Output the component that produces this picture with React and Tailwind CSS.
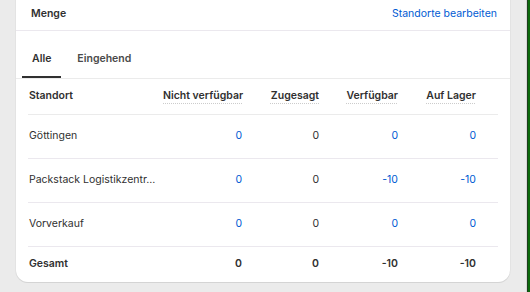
const rows = [
  { name: "Göttingen", values: [0, 0, 0, 0] },
  { name: "Packstack Logistikzentr...", values: [0, 0, -10, -10] },
  { name: "Vorverkauf", values: [0, 0, 0, 0] },
];

const columns = ["Nicht verfügbar", "Zugesagt", "Verfügbar", "Auf Lager"];

export default function App() {
  return (
    <div
      className="flex h-[292px] w-[530px] overflow-hidden bg-[#ebebeb] text-[#303030]"
      style={{ fontFamily: "Inter, 'Noto Sans', sans-serif" }}
    >
      <div className="flex-1 pl-4 pr-4">
        <div className="w-[494px] rounded-b-xl bg-white shadow-[0_1px_0_0_#d4d4d4,0_0_0_1px_#e3e3e3]">
          {/* Header */}
          <div className="flex h-[31px] items-center justify-between border-b border-[#ebe8ee] pb-[3px] pl-[15px] pr-[13px]">
            <h2 className="text-[10.5px] font-semibold">Menge</h2>
            <a href="#" className="text-[10.5px] text-[#005bd3]">
              Standorte bearbeiten
            </a>
          </div>

          {/* Tabs */}
          <div className="flex gap-[6px] border-b border-[#ebebeb] px-[6px] pt-[20px]">
            <button className="border-b-2 border-[#303030] px-[10px] pb-[9px] text-[10.5px] font-semibold text-[#303030]">
              Alle
            </button>
            <button className="border-b-2 border-transparent px-[10px] pb-[9px] text-[10.5px] font-semibold text-[#4a4a4a]">
              Eingehend
            </button>
          </div>

          {/* Table */}
          <div className="px-3 text-[10.5px]">
            <div className="grid h-[36px] grid-cols-[1fr_79px_77px_79px_78px] items-center border-b border-[#ebebeb] pl-px pr-[22px] font-semibold">
              <span>Standort</span>
              {columns.map((c) => (
                <span key={c} className="whitespace-nowrap text-right">
                  <span className="underline decoration-[#cccccc] decoration-dotted underline-offset-[4px]">
                    {c}
                  </span>
                </span>
              ))}
            </div>
            {rows.map((r) => (
              <div
                key={r.name}
                className="grid h-[44px] grid-cols-[1fr_79px_77px_79px_78px] items-center border-b border-[#ebe8ee] pl-px pr-[22px]"
              >
                <span className="whitespace-nowrap">{r.name}</span>
                {r.values.map((v, i) => (
                  <span
                    key={i}
                    className={`text-right ${i === 1 ? "text-[#303030]" : "text-[#005bd3]"}`}
                  >
                    {v}
                  </span>
                ))}
              </div>
            ))}
            <div className="grid h-[35px] grid-cols-[1fr_79px_77px_79px_78px] items-center pl-px pr-[22px] font-semibold">
              <span>Gesamt</span>
              <span className="text-right">0</span>
              <span className="text-right">0</span>
              <span className="text-right">-10</span>
              <span className="text-right">-10</span>
            </div>
          </div>
        </div>
      </div>
      <div className="w-px bg-[#d6d6d6]" />
      <div className="w-[3px] border-l border-[#1c3d1c] bg-[#0c6a0c]" />
    </div>
  );
}
